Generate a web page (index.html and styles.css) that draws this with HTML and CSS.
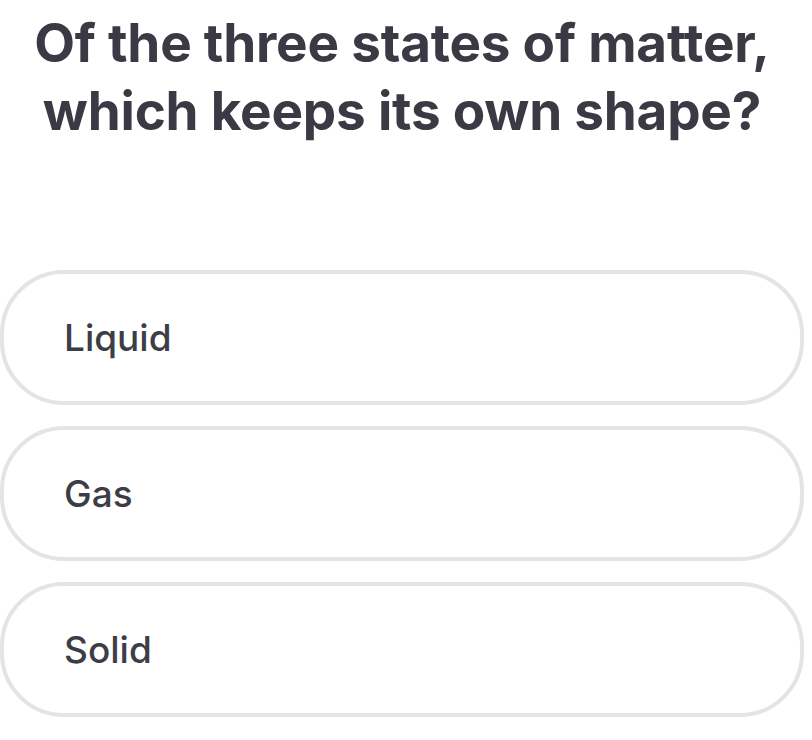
FILE: index.html
```html
<!DOCTYPE html>
<html lang="en">
<head>
<meta charset="utf-8">
<link rel="stylesheet" href="styles.css">
</head>
<body>
<main class="quiz">
  <h1 class="question">Of the three states of matter,<br>which keeps its own shape?</h1>
  <div class="options">
    <div class="option">Liquid</div>
    <div class="option">Gas</div>
    <div class="option">Solid</div>
  </div>
</main>
</body>
</html>
```

FILE: styles.css
```css
html, body {
  margin: 0;
  padding: 0;
  background: #ffffff;
}
.quiz {
  width: 812px;
  padding-top: 9px;
  display: flex;
  flex-direction: column;
}
.question {
  margin: 0;
  padding-right: 8px;
  font-family: "Inter", "Liberation Sans", sans-serif;
  font-weight: 700;
  font-size: 53px;
  line-height: 68px;
  color: #3a3a44;
  text-align: center;
  letter-spacing: -0.2px;
}
.options {
  margin-top: 125px;
  display: flex;
  flex-direction: column;
  gap: 21px;
  width: 804px;
}
.option {
  box-sizing: border-box;
  height: 135px;
  border: 4px solid #e4e4e4;
  border-radius: 64px;
  display: flex;
  align-items: center;
  padding-left: 60px;
  font-family: "Inter", "Liberation Sans", sans-serif;
  font-weight: 500;
  font-size: 37px;
  color: #3d3d48;
}
```
